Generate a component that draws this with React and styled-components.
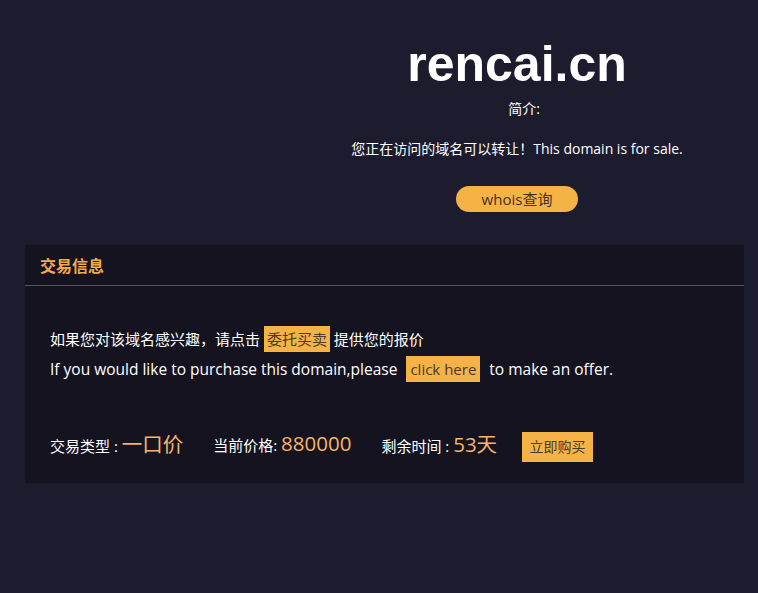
import React from 'react';
import styled, { createGlobalStyle } from 'styled-components';

const GlobalStyle = createGlobalStyle`
  html, body {
    margin: 0;
    padding: 0;
    background: #1d1b2e;
  }
  body {
    font-family: "Open Sans", "Noto Sans CJK SC", sans-serif;
    color: #fff;
  }
`;

function App() {
  return (
    <>
      <GlobalStyle />
      <Page>
        <Top>
          <div />
          <Intro>
            <DomainName>rencai.cn</DomainName>
            <Label>简介:</Label>
            <SaleText>您正在访问的域名可以转让！This domain is for sale.</SaleText>
            <WhoisButton>whois查询</WhoisButton>
          </Intro>
        </Top>
        <Panel>
          <PanelHead>交易信息</PanelHead>
          <PanelBody>
            <Line>
              如果您对该域名感兴趣，请点击 <Mark>委托买卖</Mark> 提供您的报价
            </Line>
            <Line $en>
              If you would like to purchase this domain,please <Mark $en>click here</Mark> to make an offer.
            </Line>
            <Deal>
              <DealItem>
                交易类型 : <Value>一口价</Value>
              </DealItem>
              <DealItem>
                当前价格: <Value>880000</Value>
              </DealItem>
              <DealItem>
                剩余时间 : <Value>53天</Value>
              </DealItem>
              <BuyButton>立即购买</BuyButton>
            </Deal>
          </PanelBody>
        </Panel>
      </Page>
    </>
  );
}

export default App;

const Page = styled.div`
  width: 758px;
  height: 593px;
  background: #1d1b2e;
  padding-top: 36px;
  box-sizing: border-box;
`;

const Top = styled.div`
  display: grid;
  grid-template-columns: 276px 1fr;
`;

const Intro = styled.div`
  display: flex;
  flex-direction: column;
  align-items: center;
`;

const DomainName = styled.h1`
  margin: 0;
  font-family: "Liberation Sans", Arial, sans-serif;
  font-size: 50px;
  font-weight: 700;
  line-height: 56px;
  color: #fff;
`;

const Label = styled.div`
  margin-top: 8px;
  font-size: 14px;
  line-height: 18px;
  padding-left: 14px;
`;

const SaleText = styled.div`
  margin-top: 21px;
  font-size: 14px;
  line-height: 20px;
`;

const WhoisButton = styled.div`
  margin-top: 27px;
  width: 122px;
  height: 26px;
  border-radius: 13px;
  background: #f5b245;
  color: #3f3325;
  font-size: 15px;
  line-height: 26px;
  text-align: center;
`;

const Panel = styled.div`
  margin: 33px 14px 0 25px;
  background: #15131f;
`;

const PanelHead = styled.div`
  height: 40px;
  line-height: 42px;
  padding-left: 15px;
  font-size: 16px;
  font-weight: 700;
  color: #f1ab4a;
  border-bottom: 1px solid #55535f;
`;

const PanelBody = styled.div`
  padding: 38px 24px 22px 25px;
`;

const Line = styled.div`
  font-size: ${(p) => (p.$en ? '15.5px' : '15px')};
  line-height: 30px;
  white-space: nowrap;
`;

const Mark = styled.span`
  display: inline-block;
  background: #f5b245;
  color: #4a3a28;
  font-size: 15px;
  line-height: 26px;
  padding: 0 ${(p) => (p.$en ? '4px' : '3px')};
  margin: 0 ${(p) => (p.$en ? '5px' : '0')};
`;

const Deal = styled.div`
  display: flex;
  align-items: center;
  margin-top: 41px;
  height: 36px;
`;

const DealItem = styled.div`
  font-size: 15px;
  margin-right: 30px;
  white-space: nowrap;
`;

const Value = styled.span`
  font-size: 20.5px;
  color: #f4b46a;
`;

const BuyButton = styled.div`
  width: 71px;
  height: 30px;
  line-height: 30px;
  text-align: center;
  background: #f5b245;
  color: #4a3a28;
  font-size: 14px;
  margin: 8px 0 0 -5px;
`;
